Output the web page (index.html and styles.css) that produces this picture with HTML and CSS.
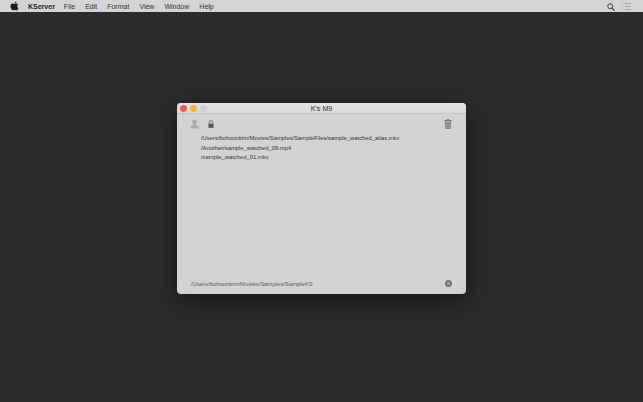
FILE: index.html
```html
<!DOCTYPE html>
<html>
<head>
    <title>KServer</title>
    <link rel="stylesheet" href="styles.css">
</head>
<body>
    <div class="menubar">
        <div class="menu-left">
            <svg class="apple" width="9" height="10" viewBox="0 0 18 20"><path d="M13 1c.2 1.700-1.300 3.800-3.500 3.800C9.300 3 11 1.200 13 1zM9.300 5.800c1 0 1.900-.8 3.500-.8 1.300 0 2.700.7 3.600 2-3 1.800-2.500 5.900.6 7.200-.8 2-2.400 4.800-4 4.800-1.200 0-1.700-.8-3.200-.8s-2 .8-3.200.8C4.300 19 1 14.500 1 10.500 1 7 3.200 5.100 5.500 5.100c1.600 0 2.800.7 3.800.7z" fill="#1c1c1c"/></svg>
            <span class="menu-app">KServer</span>
            <span>File</span>
            <span>Edit</span>
            <span>Format</span>
            <span>View</span>
            <span>Window</span>
            <span>Help</span>
        </div>
        <div class="menu-right">
            <svg width="8" height="8" viewBox="0 0 9 9"><circle cx="3.600" cy="3.600" r="2.800" fill="none" stroke="#333" stroke-width="1"/><path d="M5.700 5.700L8.500 8.500" stroke="#333" stroke-width="1.300"/></svg>
            <svg width="9" height="7" viewBox="0 0 9 7"><path d="M0 .5h1M2.500 .5h6.500M0 3.500h1M2.500 3.500h6.500M0 6.500h1M2.500 6.500h6.500" stroke="#a8a8a8" stroke-width="1"/></svg>
        </div>
    </div>

    <div class="desktop">
        <div class="window">
            <div class="titlebar">
                <div class="lights">
                    <span class="light red"></span>
                    <span class="light yellow"></span>
                    <span class="light grey"></span>
                </div>
                <div class="title">K's M9</div>
            </div>
            <div class="content">
                <div class="toolbar">
                    <div class="tool-group">
                        <svg width="9" height="10" viewBox="0 0 9 10"><circle cx="4.500" cy="2.700" r="2.300" fill="#a9a9a9"/><path d="M3.500 4.500h2v1.600l3 1.400V9.500H.5V7.500l3-1.400z" fill="#a9a9a9"/></svg>
                        <svg width="6" height="8" viewBox="0 0 7 9"><path d="M1.500 4V2.500a2 2 0 0 1 4 0V4" fill="none" stroke="#666" stroke-width="1"/><rect x="0.500" y="4" width="6" height="5" fill="#555"/></svg>
                    </div>
                    <svg width="8" height="10" viewBox="0 0 8 10"><path d="M0 1.500h8M3 1.500V.5h2v1" fill="none" stroke="#808080" stroke-width="1"/><path d="M.8 2.500h6.400L6.700 10H1.300z" fill="#858585"/><path d="M2.700 3.500v5.500M4 3.500v5.500M5.300 3.500v5.500" stroke="#b5b5b5" stroke-width=".5"/></svg>
                </div>
                <ul class="file-list">
                    <li>/Users/bohoonkim/Movies/Samples/SampleFiles/sample_watched_alias.mkv</li>
                    <li>/Another/sample_watched_09.mp4</li>
                    <li>/sample_watched_01.mkv</li>
                </ul>
                <div class="footer">
                    <span class="path">/Users/bohoonkim/Movies/Samples/SampleKS</span>
                    <span class="status-dot"></span>
                </div>
            </div>
        </div>
    </div>
</body>
</html>
```

FILE: styles.css
```css
html, body {
    height: 100%;
}
body {
    margin: 0;
    display: flex;
    flex-direction: column;
    background-color: #2c2c2c;
    font-family: "Liberation Sans", Arial, sans-serif;
    overflow: hidden;
}
.menubar {
    height: 11px;
    padding-top: 1px;
    background-color: #d4d4d4;
    display: flex;
    justify-content: space-between;
    align-items: center;
    font-size: 7px;
    color: #333;
}
.menu-left {
    display: flex;
    align-items: center;
    gap: 10px;
    padding-left: 10px;
}
.menu-app {
    font-weight: bold;
    color: #222;
    margin-left: -1px;
    margin-right: -1px;
}
.apple {
    margin-top: -2px;
}
.menu-right {
    display: flex;
    align-items: center;
    gap: 7px;
    padding-right: 12px;
}
.desktop {
    flex: 1;
    padding: 91px 0 0 177px;
}
.window {
    width: 289px;
    height: 191px;
    background-color: #d3d3d3;
    border-radius: 4px;
    box-shadow: 0 6px 28px rgba(0, 0, 0, 0.55);
    display: flex;
    flex-direction: column;
    overflow: hidden;
}
.titlebar {
    height: 10px;
    display: flex;
    align-items: center;
    justify-content: center;
    position: relative;
    background-image: linear-gradient(#e4e4e4, #d8d8d8);
    border-bottom: 1px solid #c4c4c4;
    font-size: 7.200px;
    color: #333;
}
.lights {
    position: absolute;
    left: 3px;
    top: 2px;
    display: flex;
    gap: 3px;
}
.light {
    width: 7px;
    height: 7px;
    border-radius: 50%;
}
.red {
    background-color: #fc5b57;
}
.yellow {
    background-color: #fdb53a;
}
.grey {
    background-color: #cfcfcf;
}
.content {
    flex: 1;
    display: flex;
    flex-direction: column;
    padding: 5px 14px 7px 13px;
}
.toolbar {
    display: flex;
    justify-content: space-between;
    align-items: center;
    height: 10px;
}
.tool-group {
    display: flex;
    align-items: center;
    gap: 9px;
}
.file-list {
    list-style: none;
    margin: 5px 0 0;
    padding: 0 0 0 11px;
    font-size: 5.850px;
    color: #333;
    flex: 1;
}
.file-list li {
    height: 9.500px;
    line-height: 9.500px;
    white-space: nowrap;
}
.footer {
    display: flex;
    justify-content: space-between;
    align-items: center;
    padding-left: 1px;
    font-size: 5.900px;
    color: #5c5c5c;
}
.status-dot {
    width: 3px;
    height: 3px;
    border: 2px solid #777;
    background-color: #a5a5a5;
    border-radius: 50%;
}
```
